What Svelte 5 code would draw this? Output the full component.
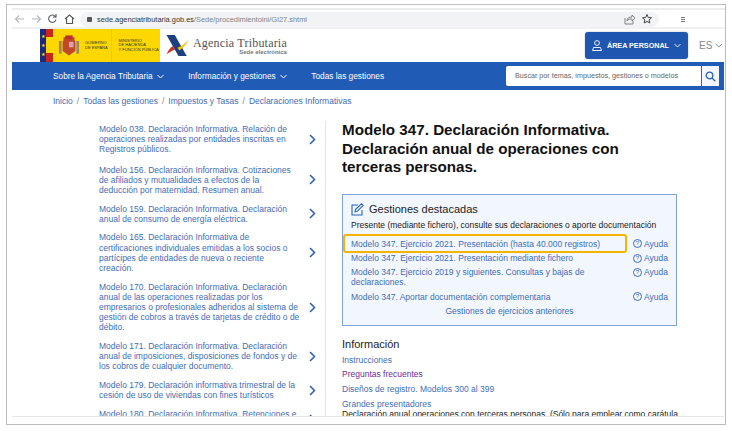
<script>
  const sideLinks = [
    "Modelo 038. Declaración Informativa. Relación de operaciones realizadas por entidades inscritas en Registros públicos.",
    "Modelo 156. Declaración Informativa. Cotizaciones de afiliados y mutualidades a efectos de la deducción por maternidad. Resumen anual.",
    "Modelo 159. Declaración Informativa. Declaración anual de consumo de energía eléctrica.",
    "Modelo 165. Declaración Informativa de certificaciones individuales emitidas a los socios o partícipes de entidades de nueva o reciente creación.",
    "Modelo 170. Declaración Informativa. Declaración anual de las operaciones realizadas por los empresarios o profesionales adheridos al sistema de gestión de cobros a través de tarjetas de crédito o de débito.",
    "Modelo 171. Declaración Informativa. Declaración anual de imposiciones, disposiciones de fondos y de los cobros de cualquier documento.",
    "Modelo 179. Declaración informativa trimestral de la cesión de uso de viviendas con fines turísticos",
    "Modelo 180. Declaración Informativa. Retenciones e ingresos a cuenta"
  ];
  const gestiones = [
    "Modelo 347. Ejercicio 2021. Presentación (hasta 40.000 registros)",
    "Modelo 347. Ejercicio 2021. Presentación mediante fichero",
    "Modelo 347. Ejercicio 2019 y siguientes. Consultas y bajas de declaraciones.",
    "Modelo 347. Aportar documentación complementaria"
  ];
</script>

<div class="frame">
  <div class="browser">
    <svg class="nav-icon" width="62" height="12" viewBox="0 0 62 12" fill="none">
      <path d="M9 6H0.500M4 2.500.5 6 4 9.500" stroke="#b5b8bc" stroke-width="1.100"/>
      <path d="M17 6h8.500M22 2.500 25.500 6 22 9.500" stroke="#b5b8bc" stroke-width="1.100"/>
      <path d="M40.300 3.500a3.700 3.700 0 1 0 .7 3M41 1v3h-3" stroke="#55585c" stroke-width="1.100"/>
      <path d="M50 6l4.500-4L59 6M51.500 5v5.500h6V5" stroke="#55585c" stroke-width="1.100"/>
    </svg>
    <div class="address">
      <span class="lock"></span>
      <span class="url">sede.agenciatributaria.gob.es<span class="url-path">/Sede/procedimientoini/GI27.shtml</span></span>
      <svg class="addr-icons" width="30" height="12" viewBox="0 0 30 12" fill="none">
        <path d="M1 5v6h8V8M3 8c0-3 2-4 5-4V2l3 3-3 3V6C6 6 4 6 3 8z" stroke="#777" stroke-width=".9"/>
        <path d="M23 1.500l1.300 3 3.200.3-2.400 2.100.7 3.100-2.800-1.600-2.800 1.600.7-3.100-2.400-2.100 3.200-.3z" stroke="#444" stroke-width="1"/>
      </svg>
    </div>
    <div class="menu-dots"><i></i><i></i><i></i></div>
  </div>

  <header class="site-head">
    <div class="gob">
      <div class="flag"><span class="stars">★ ★ ★</span></div>
      <svg class="shield" width="22" height="23" viewBox="0 0 24 24">
        <rect x="1" y="7" width="3" height="14" fill="#9a8a6a"/>
        <rect x="20" y="7" width="3" height="14" fill="#9a8a6a"/>
        <path d="M6 3h12v3l1 2v10l-7 5-7-5V8l1-2z" fill="#c0482a"/>
        <path d="M8 1h8v4H8z" fill="#b8322a"/>
        <rect x="12" y="8" width="5" height="6" fill="#d9a0b8"/>
      </svg>
      <div class="gob-text">GOBIERNO<br>DE ESPAÑA</div>
      <div class="gob-text min">MINISTERIO<br>DE HACIENDA<br>Y FUNCIÓN PÚBLICA</div>
    </div>
    <div class="aeat">
      <svg width="24" height="23" viewBox="0 0 25 25">
        <path d="M0 1h9l13 23h-9z" fill="#1f3f7f"/>
        <path d="M0 22c3-6 5-8 7-9l2 4c-3 1-6 3-9 5z" fill="#c8382a"/>
        <path d="M12 15c5-2 9-5 12-9-2 5-6 9-10 12z" fill="#f2c200"/>
      </svg>
      <div class="aeat-text">
        <div class="aeat-name">Agencia Tributaria</div>
        <div class="aeat-sub">Sede electrónica</div>
      </div>
    </div>
    <button class="personal">
      <svg width="10" height="11" viewBox="0 0 10 11" fill="none" stroke="#fff" stroke-width=".9"><circle cx="5" cy="3" r="2.400"/><path d="M1.500 7.500h7l1 3h-9z"/></svg>
      <span>ÁREA PERSONAL</span>
      <svg width="7" height="5" viewBox="0 0 7 5" fill="none" stroke="#fff" stroke-width=".9"><path d="M.5 1l3 3 3-3"/></svg>
    </button>
    <div class="lang">ES
      <svg width="8" height="5" viewBox="0 0 8 5" fill="none" stroke="#888" stroke-width="1"><path d="M.5.8 4 4 7.500.8"/></svg>
    </div>
  </header>

  <nav class="main-nav">
    <span class="nav-item">Sobre la Agencia Tributaria <svg width="7" height="5" viewBox="0 0 7 5" fill="none" stroke="#fff"><path d="M.5 1l3 3 3-3"/></svg></span>
    <span class="nav-item">Información y gestiones <svg width="7" height="5" viewBox="0 0 7 5" fill="none" stroke="#fff"><path d="M.5 1l3 3 3-3"/></svg></span>
    <span class="nav-item">Todas las gestiones</span>
    <div class="search">
      <span class="search-input">Buscar por temas, impuestos, gestiones o modelos</span>
      <span class="search-btn">
        <svg width="11" height="11" viewBox="0 0 11 11" fill="none" stroke="#2b63b8" stroke-width="1.300"><circle cx="4.500" cy="4.500" r="3.300"/><path d="M7 7l3.300 3.300"/></svg>
      </span>
    </div>
  </nav>

  <div class="crumbs">
    <a>Inicio</a><i>/</i><a>Todas las gestiones</a><i>/</i><a>Impuestos y Tasas</a><i>/</i><a>Declaraciones Informativas</a>
  </div>

  <div class="page">
    <aside class="side">
      {#each sideLinks as item}
        <div class="side-row">
          <a class="side-link">{item}</a>
          <svg class="chev" width="7" height="11" viewBox="0 0 7 11" fill="none" stroke="#2b5fb0" stroke-width="1.500"><path d="M1 1l4.500 4.500L1 10"/></svg>
        </div>
      {/each}
    </aside>
    <main class="content">
      <h1>Modelo 347. Declaración Informativa. Declaración anual de operaciones con terceras personas.</h1>
      <section class="box">
        <h2>
          <svg width="13" height="13" viewBox="0 0 13 13" fill="none" stroke="#2b63b8" stroke-width="1.100"><path d="M11 7v5H1V2h6"/><path d="M4.500 6.500 10.500.8l1.700 1.700-6 5.800-2.200.5z"/></svg>
          Gestiones destacadas
        </h2>
        <p>Presente (mediante fichero), consulte sus declaraciones o aporte documentación</p>
        {#each gestiones as g, i}
          <div class="g-row" class:first={i === 0}>
            <a class="g-link">{g}</a>
            <span class="help"><span class="q">?</span> Ayuda</span>
          </div>
        {/each}
        <a class="older">Gestiones de ejercicios anteriores</a>
      </section>
      <h3>Información</h3>
      <a class="info">Instrucciones</a>
      <a class="info visited">Preguntas frecuentes</a>
      <a class="info">Diseños de registro. Modelos 300 al 399</a>
      <a class="info tight">Grandes presentadores</a>
      <div class="note">Declaración anual operaciones con terceras personas. (Sólo para emplear como carátula en la presentación)</div>
    </main>
  </div>
</div>

<style>
  :global(body) {
    margin: 0;
    background: #fff;
  }
  .frame {
    box-sizing: border-box;
    display: flex;
    flex-direction: column;
    width: 720px;
    height: 421px;
    margin: 4px 0 0 6px;
    padding: 3px 0 7px 5px;
    border: 1px solid #bcbcbc;
    overflow: hidden;
    font-family: "Liberation Sans", Arial, sans-serif;
    font-size: 8.5px;
    color: #222;
  }
  a {
    color: #3f6db5;
  }
  .browser {
    box-sizing: border-box;
    display: flex;
    align-items: center;
    flex: none;
    height: 21px;
    padding: 1px 0 0 3px;
    border-top: 2px solid #eceded;
    border-bottom: 2px solid #f0f0f0;
  }
  .nav-icon {
    flex: none;
    overflow: visible;
  }
  .address {
    box-sizing: border-box;
    display: flex;
    align-items: center;
    width: 579px;
    height: 15px;
    margin-left: 3px;
    padding: 0 8px 0 7px;
    border-radius: 8px;
    background: #f1f3f4;
  }
  .lock {
    width: 5px;
    height: 5px;
    margin-right: 5px;
    border-radius: 1px;
    background: #555;
  }
  .url {
    font-size: 7.400px;
    color: #333;
  }
  .url-path {
    color: #808488;
  }
  .addr-icons {
    margin-left: auto;
    margin-right: -3px;
  }
  .menu-dots {
    display: flex;
    flex-direction: column;
    gap: 1px;
    margin-left: 22px;
  }
  .menu-dots i {
    width: 4px;
    height: 1px;
    background: #777;
  }
  .site-head {
    display: flex;
    align-items: center;
    flex: none;
    height: 33px;
    padding-left: 28px;
  }
  .gob {
    display: flex;
    align-items: center;
    flex: none;
    width: 120px;
    height: 33px;
    background: linear-gradient(90deg, #fdd800 71px, #efca00 71px 72px, #fdd800 72px);
  }
  .flag {
    position: relative;
    flex: none;
    width: 13px;
    height: 33px;
    margin-right: 5px;
    background: #1d2a78;
  }
  .flag::after {
    content: "";
    position: absolute;
    left: 6px;
    top: 0;
    width: 7px;
    height: 33px;
    background: linear-gradient(#c8261c 0 8px, #fdd800 8px 24px, #c8261c 24px);
  }
  .stars {
    position: absolute;
    left: 0;
    top: 3px;
    width: 6px;
    font-size: 5px;
    line-height: 9px;
    color: #f5d800;
    text-align: center;
  }
  .shield {
    flex: none;
  }
  .gob-text {
    margin-left: 5px;
    font-size: 4px;
    line-height: 4.500px;
    color: #333;
    white-space: nowrap;
  }
  .min {
    margin-left: 11px;
  }
  .aeat {
    display: flex;
    align-items: center;
    gap: 3px;
    margin-left: 6px;
  }
  .aeat-text {
    text-align: right;
  }
  .aeat-name {
    font-family: "Liberation Serif", serif;
    font-size: 12px;
    line-height: 12px;
    color: #555;
    letter-spacing: .2px;
  }
  .aeat-sub {
    font-size: 6px;
    line-height: 6px;
    font-weight: bold;
    color: #777;
  }
  .personal {
    display: flex;
    align-items: center;
    justify-content: center;
    gap: 5px;
    width: 103px;
    height: 27px;
    margin-left: auto;
    padding: 0;
    border: 0;
    border-radius: 3px;
    background: #1f56b0;
    box-shadow: 0 0 2px rgba(0,0,0,.3);
    font-family: inherit;
    font-size: 7.200px;
    font-weight: bold;
    white-space: nowrap;
    color: #fff;
  }
  .lang {
    display: flex;
    align-items: center;
    gap: 3px;
    width: 24px;
    margin: 0 2px 0 11px;
    font-size: 10px;
    color: #888;
  }
  .main-nav {
    display: flex;
    align-items: center;
    flex: none;
    height: 28px;
    margin-right: 1px;
    padding-left: 41px;
    background: #205bb6;
    color: #fff;
    font-size: 8.300px;
  }
  .nav-item {
    display: flex;
    align-items: center;
    gap: 4px;
    margin-right: 24.500px;
  }
  .search {
    box-sizing: border-box;
    display: flex;
    width: 213px;
    height: 20px;
    margin: 0 5px 0 auto;
    border-radius: 2px;
    background: #fff;
  }
  .search-input {
    flex: 1;
    padding-left: 9px;
    font-size: 7.200px;
    line-height: 19px;
    color: #666;
  }
  .search-btn {
    display: flex;
    align-items: center;
    justify-content: center;
    width: 17px;
    border-left: 1px solid #2b63b8;
    background: #f3f7fd;
  }
  .crumbs {
    display: flex;
    align-items: center;
    flex: none;
    height: 22px;
    padding-left: 41px;
    font-size: 8.500px;
  }
  .crumbs i {
    margin: 0 4px;
    font-style: normal;
    color: #888;
  }
  .page {
    display: flex;
    flex: 1;
    min-height: 0;
    margin-right: 1px;
    padding-top: 9px;
    border-bottom: 1px solid #e6e6e6;
    overflow: hidden;
  }
  .side {
    box-sizing: border-box;
    flex: none;
    width: 314px;
    padding: 3px 9px 0 87px;
    border-right: 1px solid #e4e4e4;
  }
  .side-row {
    display: flex;
    align-items: center;
    gap: 9px;
    margin-bottom: 8.400px;
  }
  .side-row:first-child {
    margin-bottom: 10px;
  }
  .side-link {
    flex: 1;
    line-height: 10.200px;
  }
  .chev {
    flex: none;
  }
  .content {
    width: 345px;
    margin-left: 16px;
  }
  h1 {
    width: 335px;
    margin: 0 0 17px;
    font-size: 15.200px;
    line-height: 18.500px;
    color: #111;
  }
  .box {
    box-sizing: border-box;
    width: 335px;
    height: 132px;
    padding: 7px 8px 0;
    border: 1px solid #7fa5df;
    background: #f2f7fd;
  }
  h2 {
    display: flex;
    align-items: center;
    gap: 5px;
    margin: 0;
    font-size: 11px;
    font-weight: normal;
    line-height: 15px;
    color: #222;
  }
  .box p {
    margin: 2px 0 6px;
    line-height: 12px;
  }
  .g-row {
    display: flex;
    gap: 8px;
    padding: 2.200px 0;
    line-height: 10px;
  }
  .first {
    position: relative;
  }
  .first::before {
    content: "";
    position: absolute;
    left: -8px;
    top: -3px;
    box-sizing: border-box;
    width: 284px;
    height: 19px;
    border: 2px solid #f5b400;
    border-radius: 3px;
  }
  .g-link {
    flex: 1;
  }
  .help {
    display: flex;
    align-items: flex-start;
    gap: 2px;
    flex: none;
    width: 35px;
    color: #3f6db5;
  }
  .q {
    box-sizing: border-box;
    flex: none;
    width: 9px;
    height: 9px;
    margin-top: .5px;
    border: 1px solid #3f6db5;
    border-radius: 50%;
    font-size: 6px;
    line-height: 7px;
    text-align: center;
  }
  .older {
    display: block;
    margin-top: 1px;
    text-align: center;
    line-height: 12px;
  }
  h3 {
    margin: 11px 0 4px;
    font-size: 11px;
    font-weight: normal;
    line-height: 14px;
  }
  .info {
    display: block;
    margin-bottom: 4.800px;
    line-height: 10px;
  }
  .visited {
    color: #6a2ca0;
  }
  .tight {
    margin-bottom: 0;
  }
  .note {
    line-height: 10px;
  }
</style>
